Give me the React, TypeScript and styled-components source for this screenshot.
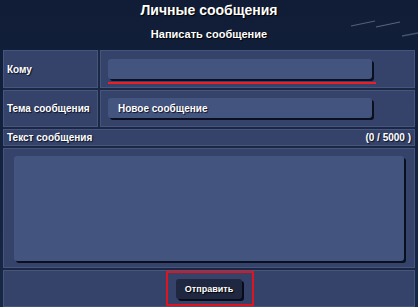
import React from 'react';
import styled, { createGlobalStyle } from 'styled-components';

// ========= Global =========
const GlobalStyle = createGlobalStyle`
  html, body {
    margin: 0;
    padding: 0;
    background: #14213d;
  }
  body {
    font-family: Tahoma, "Liberation Sans", Arial, sans-serif;
    color: #ffffff;
  }
`;

// ========= Styled components =========
const Page = styled.div`
  position: relative;
  width: 418px;
  height: 307px;
  overflow: hidden;
  background: linear-gradient(to bottom, #111d37 0%, #14233f 60%, #172845 100%);
  padding: 0 3px;
  box-sizing: border-box;
`;

const Streaks = styled.svg`
  position: absolute;
  top: 0;
  right: 0;
  pointer-events: none;
`;

const Header = styled.div`
  position: relative;
  height: 50px;
  display: flex;
  flex-direction: column;
  align-items: center;
`;

const Title = styled.h1`
  margin: 2px 0 0;
  font-size: 14px;
  font-weight: bold;
  line-height: 17px;
  text-shadow: 1px 1px 1px #000;
`;

const Subtitle = styled.h2`
  margin: 9px 0 0;
  font-size: 11px;
  font-weight: bold;
  line-height: 13px;
  text-shadow: 1px 1px 1px #000;
`;

const Form = styled.div`
  position: relative;
  display: grid;
  grid-template-columns: 95px 1fr;
  grid-template-rows: 38px 37px 17px 120px 37px;
  gap: 2px;
  background: #1c2744;
`;

const Cell = styled.div<{ $span?: boolean; $pad?: string }>`
  grid-column: ${(p) => (p.$span ? '1 / -1' : 'auto')};
  background: #35426a;
  border: 1px solid #46557e;
  box-sizing: border-box;
  padding: ${(p) => p.$pad ?? '0'};
`;

const Label = styled.span`
  font-size: 10px;
  font-weight: bold;
  white-space: nowrap;
  text-shadow: 1px 1px 1px #0b1226;
`;

const LabelCell = styled(Cell)`
  display: flex;
  align-items: center;
  padding-left: 3px;
`;

const HeaderCell = styled(Cell)`
  display: flex;
  align-items: center;
  justify-content: space-between;
  padding: 0 3px;
`;

const FieldWrap = styled.div<{ $error?: boolean }>`
  width: 268px;
  padding-bottom: 3px;
  border-bottom: 2px solid ${(p) => (p.$error ? '#ee1c25' : 'transparent')};
`;

const Input = styled.div`
  width: 264px;
  height: 20px;
  background: #43557f;
  border-radius: 3px;
  box-shadow: 2px 2px 0 #0a1020;
  display: flex;
  align-items: center;
  padding-left: 10px;
  box-sizing: border-box;
  font-size: 10px;
  font-weight: bold;
  text-shadow: 1px 1px 1px #0b1226;
`;

const TextArea = styled.div`
  width: 390px;
  height: 105px;
  background: #43557f;
  border-radius: 3px;
  box-shadow: 2px 2px 0 #0a1020;
`;

const ButtonCell = styled(Cell)`
  display: flex;
  justify-content: center;
  align-items: center;
`;

const Highlight = styled.div`
  margin-left: 2px;
  width: 88px;
  height: 35px;
  border: 2px solid #e0141e;
  box-sizing: border-box;
  display: flex;
  align-items: center;
  justify-content: center;
`;

const SendButton = styled.button`
  width: 66px;
  height: 20px;
  margin-left: -2px;
  margin-top: 1px;
  border: none;
  border-radius: 3px;
  background: #1f2840;
  box-shadow: 2px 2px 0 #080c18;
  color: #ffffff;
  font-family: inherit;
  font-size: 9px;
  font-weight: bold;
  text-shadow: 1px 1px 1px #000;
  padding: 0;
  cursor: pointer;
`;

// ========= Main component =========
const App: React.FC = () => {
  return (
    <>
      <GlobalStyle />
      <Page>
        <Streaks width="90" height="40" viewBox="0 0 90 40">
          <path d="M23 26 L47 21" stroke="#7d8aa6" strokeWidth="1.2" opacity="0.6" />
          <path d="M48 27 L72 22" stroke="#8893ad" strokeWidth="1.2" opacity="0.6" />
          <path d="M74 36 L90 33" stroke="#6f7d9a" strokeWidth="1.4" opacity="0.55" />
        </Streaks>

        <Header>
          <Title>Личные сообщения</Title>
          <Subtitle>Написать сообщение</Subtitle>
        </Header>

        <Form>
          <LabelCell>
            <Label>Кому</Label>
          </LabelCell>
          <Cell $pad="8px 0 0 7px">
            <FieldWrap $error>
              <Input />
            </FieldWrap>
          </Cell>

          <LabelCell>
            <Label>Тема сообщения</Label>
          </LabelCell>
          <Cell $pad="7px 0 0 7px">
            <Input>Новое сообщение</Input>
          </Cell>

          <HeaderCell $span>
            <Label>Текст сообщения</Label>
            <Label>(0 / 5000 )</Label>
          </HeaderCell>

          <Cell $span $pad="7px 0 0 10px">
            <TextArea />
          </Cell>

          <ButtonCell $span>
            <Highlight>
              <SendButton>Отправить</SendButton>
            </Highlight>
          </ButtonCell>
        </Form>
      </Page>
    </>
  );
};

export default App;
